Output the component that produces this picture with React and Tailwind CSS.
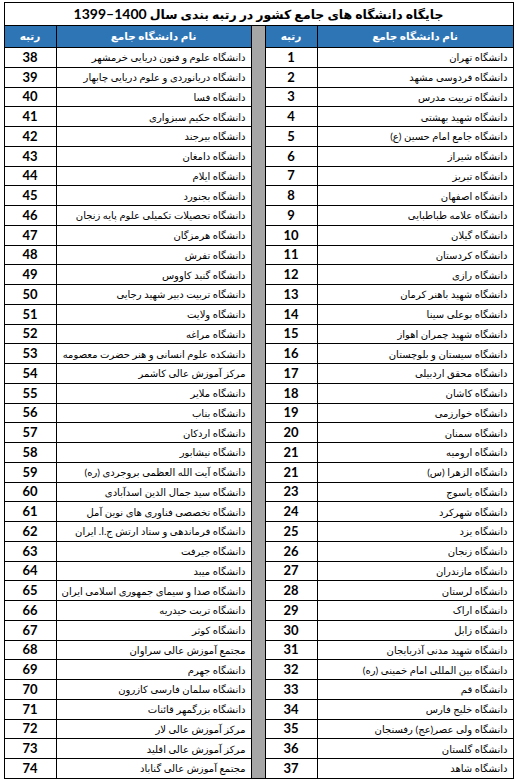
import React from 'react'

const right = [
  'دانشگاه تهران',
  'دانشگاه فردوسی مشهد',
  'دانشگاه تربیت مدرس',
  'دانشگاه شهید بهشتی',
  'دانشگاه جامع امام حسین (ع)',
  'دانشگاه شیراز',
  'دانشگاه تبریز',
  'دانشگاه اصفهان',
  'دانشگاه علامه طباطبایی',
  'دانشگاه گیلان',
  'دانشگاه کردستان',
  'دانشگاه رازی',
  'دانشگاه شهید باهنر کرمان',
  'دانشگاه بوعلی سینا',
  'دانشگاه شهید چمران اهواز',
  'دانشگاه سیستان و بلوچستان',
  'دانشگاه محقق اردبیلی',
  'دانشگاه کاشان',
  'دانشگاه خوارزمی',
  'دانشگاه سمنان',
  'دانشگاه ارومیه',
  'دانشگاه الزهرا (س)',
  'دانشگاه یاسوج',
  'دانشگاه شهرکرد',
  'دانشگاه یزد',
  'دانشگاه زنجان',
  'دانشگاه مازندران',
  'دانشگاه لرستان',
  'دانشگاه اراک',
  'دانشگاه زابل',
  'دانشگاه شهید مدنی آذربایجان',
  'دانشگاه بین المللی امام خمینی (ره)',
  'دانشگاه قم',
  'دانشگاه خلیج فارس',
  'دانشگاه ولی عصر(عج) رفسنجان',
  'دانشگاه گلستان',
  'دانشگاه شاهد',
]
const rightRanks = [1, 2, 3, 4, 5, 6, 7, 8, 9, 10, 11, 12, 13, 14, 15, 16, 17, 18, 19, 20, 21, 21, 23, 24, 25, 26, 27, 28, 29, 30, 31, 32, 33, 34, 35, 36, 37]

const left = [
  'دانشگاه علوم و فنون دریایی خرمشهر',
  'دانشگاه دریانوردی و علوم دریایی چابهار',
  'دانشگاه فسا',
  'دانشگاه حکیم سبزواری',
  'دانشگاه بیرجند',
  'دانشگاه دامغان',
  'دانشگاه ایلام',
  'دانشگاه بجنورد',
  'دانشگاه تحصیلات تکمیلی علوم پایه زنجان',
  'دانشگاه هرمزگان',
  'دانشگاه تفرش',
  'دانشگاه گنبد کاووس',
  'دانشگاه تربیت دبیر شهید رجایی',
  'دانشگاه ولایت',
  'دانشگاه مراغه',
  'دانشکده علوم انسانی و هنر حضرت معصومه',
  'مرکز آموزش عالی کاشمر',
  'دانشگاه ملایر',
  'دانشگاه بناب',
  'دانشگاه اردکان',
  'دانشگاه نیشابور',
  'دانشگاه آیت الله العظمی بروجردی (ره)',
  'دانشگاه سید جمال الدین اسدآبادی',
  'دانشگاه تخصصی فناوری های نوین آمل',
  'دانشگاه فرماندهی و ستاد ارتش ج.ا. ایران',
  'دانشگاه جیرفت',
  'دانشگاه میبد',
  'دانشگاه صدا و سیمای جمهوری اسلامی ایران',
  'دانشگاه تربت حیدریه',
  'دانشگاه کوثر',
  'مجتمع آموزش عالی سراوان',
  'دانشگاه جهرم',
  'دانشگاه سلمان فارسی کازرون',
  'دانشگاه بزرگمهر قائنات',
  'مرکز آموزش عالی لار',
  'مرکز آموزش عالی اقلید',
  'مجتمع آموزش عالی گناباد',
]

export default function App() {
  return (
    <div className="bg-white w-[517px] h-[780px] pt-[2px]" style={{ fontFamily: "Lato, 'DejaVu Sans', sans-serif" }}>
      <table dir="rtl" className="mx-auto border-collapse table-fixed w-[509px] text-black">
        <colgroup>
          <col className="w-[196px]" />
          <col className="w-[52px]" />
          <col className="w-[14px]" />
          <col className="w-[195px]" />
          <col className="w-[52px]" />
        </colgroup>
        <tbody>
          <tr className="h-[23px]">
            <td colSpan={5} className="border border-black text-center font-bold text-[12.5px] leading-none">
              جایگاه دانشگاه های جامع کشور در رتبه بندی سال <span className="text-[14px]">1400–1399</span>
            </td>
          </tr>
          <tr className="h-[22px] bg-[#2e75b6] text-white font-bold text-[10.5px]">
            <td className="border border-black text-center">نام دانشگاه جامع</td>
            <td className="border border-black text-center">رتبه</td>
            <td rowSpan={38} className="border border-black bg-[#a6a6a6]"></td>
            <td className="border border-black text-center">نام دانشگاه جامع</td>
            <td className="border border-black text-center">رتبه</td>
          </tr>
          {right.map((name, i) => (
            <tr key={i} className="h-[19.75px]">
              <td className="border border-black text-right pr-[5px] text-[10px] leading-none whitespace-nowrap overflow-hidden">{name}</td>
              <td className="border border-black text-center font-bold text-[13px] leading-none">{rightRanks[i]}</td>
              <td className="border border-black text-right pr-[5px] text-[10px] leading-none whitespace-nowrap overflow-hidden">{left[i]}</td>
              <td className="border border-black text-center font-bold text-[13px] leading-none">{i + 38}</td>
            </tr>
          ))}
        </tbody>
      </table>
    </div>
  )
}
